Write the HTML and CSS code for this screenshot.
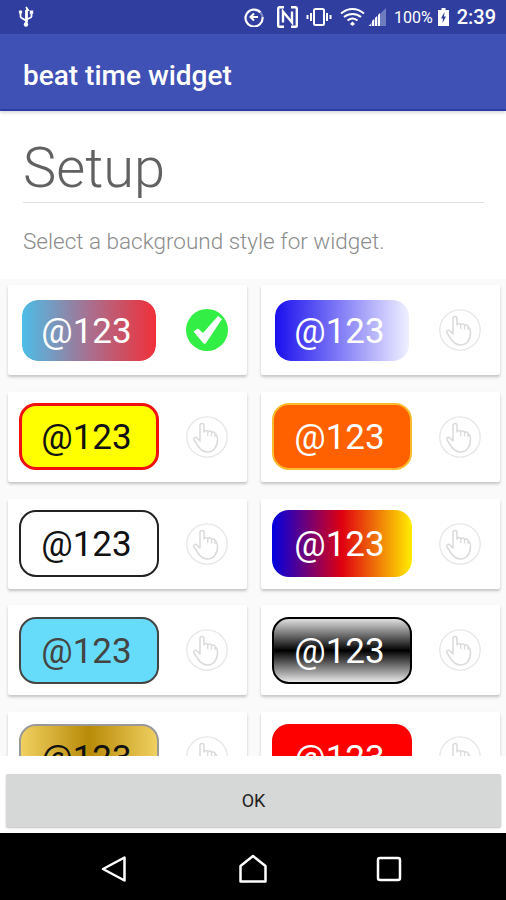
FILE: index.html
```html
<!DOCTYPE html>
<html lang="en">
<head>
    <meta charset="UTF-8">
    <meta name="viewport" content="width=device-width, initial-scale=1.0">
    <title>beat time widget</title>
    <link rel="stylesheet" href="styles.css">
</head>
<body>

    <svg class="defs" width="0" height="0">
        <symbol id="hand" viewBox="0 0 42 42">
            <circle cx="21" cy="21" r="20.2" fill="none" stroke="#e6e6e6" stroke-width="1.3"/>
            <path d="M14 25V9.500c0-2.700 4-2.700 4 0V16c.5-2 3.500-2 4 0 .5-1.500 3.300-1.300 3.700.6.6-1.200 3.200-.8 3.500 1.200 1.500 1 2.300 3 2.300 6 0 7-4 12.200-10 12.200-5 0-7.500-3-9.500-6l-4-6c-1.200-2 1.200-3.500 3-2z" fill="none" stroke="#dadada" stroke-width="1.500" stroke-linejoin="round"/>
            <path d="M21.700 16v4M25.500 17v3.500M29 18v3" fill="none" stroke="#dadada" stroke-width="1.200"/>
        </symbol>
    </svg>

    <div class="status-bar">
        <svg class="usb" width="18" height="22" viewBox="0 0 18 22">
            <path d="M9 1l2 3H10v12.500M9 4v14M3.500 7v3.500c0 2 5.500 3 5.500 4.500M14.500 8v2.500c0 2-5.500 2-5.500 4" fill="none" stroke="#fff" stroke-width="1.800"/>
            <circle cx="9" cy="18.500" r="2.200" fill="#fff"/>
            <circle cx="3.500" cy="6" r="1.800" fill="#fff"/>
            <rect x="12.800" y="4.500" width="3.400" height="3.400" fill="#fff"/>
        </svg>
        <div class="status-right">
            <svg width="20" height="20" viewBox="0 0 20 20">
                <path d="M16.500 5.500A8.500 8.500 0 1 0 18.500 10" fill="none" stroke="#fff" stroke-width="2.200"/>
                <path d="M16.500 5.500A8.500 8.500 0 0 1 18.500 10" fill="none" stroke="#7c88c8" stroke-width="2.200"/>
                <path d="M14 10H7M10 6.500L6.500 10l3.500 3.500" fill="none" stroke="#fff" stroke-width="2"/>
            </svg>
            <svg class="nfc" width="21" height="22" viewBox="0 0 21 22">
                <path d="M7 1.200H2.500a1.300 1.300 0 0 0-1.300 1.300v17a1.300 1.300 0 0 0 1.300 1.300H7M14 1.200h4.500a1.300 1.300 0 0 1 1.300 1.300v17a1.300 1.300 0 0 1-1.300 1.300H14" fill="none" stroke="#fff" stroke-width="2.400"/>
                <path d="M6 16.500V5.500l9 11V5.500" fill="none" stroke="#fff" stroke-width="2.400"/>
            </svg>
            <svg width="26" height="20" viewBox="0 0 26 20">
                <rect x="8" y="2" width="10" height="16" rx="1.500" fill="none" stroke="#fff" stroke-width="2"/>
                <path d="M5 6v8M1.500 8v4M21 6v8M24.500 8v4" stroke="#fff" stroke-width="2"/>
            </svg>
            <svg width="25" height="20" viewBox="0 0 25 20">
                <path d="M1 6.500c7-6 16-6 23 0M4 10c5-4 12-4 17 0M7.500 13.500c3-2.300 7-2.300 10 0" fill="none" stroke="#fff" stroke-width="2"/>
                <path d="M10 17l2.500-2.500L15 17l-2.500 2z" fill="#fff"/>
            </svg>
            <svg class="signal" width="18" height="18" viewBox="0 0 18 18">
                <path d="M0 18L18 0v18z" fill="#6f7bbf"/>
                <path d="M1 18l2-2v2zM4 18v-5l2-2v7zM7 18v-8l2-2v10zM10 18V7l2-2v13z" fill="#fff"/>
            </svg>
            <span class="percent">100%</span>
            <svg class="battery" width="11" height="18" viewBox="0 0 11 18">
                <path d="M3.500 0h4v2H11v16H0V2h3.500z" fill="#fff"/>
                <path d="M6.500 4L3 10.500h2L4.500 15 8 8.500H6z" fill="#303f9f"/>
            </svg>
            <span class="clock">2:39</span>
        </div>
    </div>

    <div class="app-bar">beat time widget</div>

    <div class="setup">
        <h1>Setup</h1>
        <p>Select a background style for widget.</p>
    </div>

    <!-- Styles list, cut off by the footer -->
    <div class="style-list">
        <div class="style-grid">
            <div class="card">
                <div class="preview p-sunset">@123</div>
                <svg class="pick" viewBox="0 0 42 42">
                    <circle cx="21" cy="21" r="21" fill="#33ee44"/>
                    <path d="M7.500 22.500l4.500-3 5 4.500L32 7l4 3-16 24c-.8 1.100-2 1.100-2.900.1z" fill="#fff"/>
                </svg>
            </div>
            <div class="card">
                <div class="preview p-blue">@123</div>
                <svg class="pick"><use href="#hand"/></svg>
            </div>
            <div class="card">
                <div class="preview p-yellow">@123</div>
                <svg class="pick"><use href="#hand"/></svg>
            </div>
            <div class="card">
                <div class="preview p-orange">@123</div>
                <svg class="pick"><use href="#hand"/></svg>
            </div>
            <div class="card">
                <div class="preview p-white">@123</div>
                <svg class="pick"><use href="#hand"/></svg>
            </div>
            <div class="card">
                <div class="preview p-rainbow">@123</div>
                <svg class="pick"><use href="#hand"/></svg>
            </div>
            <div class="card">
                <div class="preview p-cyan">@123</div>
                <svg class="pick"><use href="#hand"/></svg>
            </div>
            <div class="card">
                <div class="preview p-chrome">@123</div>
                <svg class="pick"><use href="#hand"/></svg>
            </div>
            <div class="card">
                <div class="preview p-gold">@123</div>
                <svg class="pick"><use href="#hand"/></svg>
            </div>
            <div class="card">
                <div class="preview p-red">@123</div>
                <svg class="pick"><use href="#hand"/></svg>
            </div>
        </div>
    </div>

    <div class="footer">
        <button class="ok-btn">OK</button>
    </div>

    <div class="nav-bar">
        <svg width="26" height="28" viewBox="0 0 26 28">
            <path d="M2 14L23.500 2.500v23z" fill="none" stroke="#fff" stroke-width="2.500" stroke-linejoin="round"/>
        </svg>
        <svg class="nav-home" width="30" height="30" viewBox="0 0 30 30">
            <path d="M2.500 12L15 2l12.500 10v15.500h-25z" fill="none" stroke="#fff" stroke-width="2.500" stroke-linejoin="round"/>
        </svg>
        <svg width="26" height="26" viewBox="0 0 26 26">
            <rect x="2" y="2" width="22" height="22" rx="2" fill="none" stroke="#fff" stroke-width="2.500"/>
        </svg>
    </div>

</body>
</html>
```

FILE: styles.css
```css
html, body {
    height: 100%;
}

body {
    margin: 0;
    height: 900px;
    overflow: hidden;
    display: flex;
    flex-direction: column;
    font-family: 'Roboto', sans-serif;
    background-color: #fff;
}

.defs {
    position: absolute;
}

/* Status bar */
.status-bar {
    height: 34px;
    flex-shrink: 0;
    display: flex;
    align-items: center;
    justify-content: space-between;
    padding: 0 10px 0 17px;
    background-color: #303f9f;
    color: #fff;
}

.status-right {
    display: flex;
    align-items: center;
    gap: 8px;
}

.nfc {
    margin-left: 5px;
}

.signal {
    margin-left: -5px;
}

.percent {
    font-size: 16px;
}

.battery {
    margin-left: -3px;
}

.clock {
    font-size: 20px;
    font-weight: 500;
}

/* App bar */
.app-bar {
    height: 77px;
    flex-shrink: 0;
    display: flex;
    align-items: center;
    padding: 7px 0 0 23px;
    box-sizing: border-box;
    background-color: #3f51b5;
    border-bottom: 2px solid #2a3ca6;
    box-shadow: 0 2px 3px rgba(0, 0, 0, 0.15);
    color: #fff;
    font-size: 28px;
    font-weight: 500;
    position: relative;
}

/* Setup heading */
.setup {
    height: 168px;
    flex-shrink: 0;
    padding: 0 22px 0 23px;
}

.setup h1 {
    margin: 0;
    height: 92px;
    box-sizing: border-box;
    padding-top: 27px;
    border-bottom: 1px solid #e0e0e0;
    font-size: 56px;
    line-height: 61px;
    font-weight: 300;
    color: #616161;
}

.setup p {
    margin: 26px 0 0;
    font-size: 22.5px;
    line-height: 24px;
    font-weight: 300;
    color: #8c8c8c;
}

/* Style list */
.style-list {
    flex: 1;
    min-height: 0;
    overflow: hidden;
    background-color: #fafafa;
    padding: 6px 6px 0 8px;
}

.style-grid {
    display: grid;
    grid-template-columns: 239px 239px;
    column-gap: 14px;
    row-gap: 16.75px;
}

.card {
    height: 90px;
    display: flex;
    align-items: center;
    justify-content: space-between;
    padding: 0 19px 0 11px;
    background-color: #fff;
    border-radius: 2px;
    box-shadow: 0 2px 3px rgba(0, 0, 0, 0.22);
}

.preview {
    width: 140px;
    height: 67px;
    box-sizing: border-box;
    display: flex;
    align-items: center;
    justify-content: center;
    padding: 2px 5px 0 0;
    border-radius: 17px;
    font-size: 35px;
    color: #fff;
}

.pick {
    width: 42px;
    height: 42px;
}

.p-sunset {
    border: 3px solid #fff;
    background: linear-gradient(to right, #4dbde8, #a8708f 50%, #f0303a);
    background-clip: padding-box;
    border-radius: 19px;
}

.p-blue {
    border: 3px solid #fff;
    background: linear-gradient(to right, #1a10ee, #f0f0ff);
    background-clip: padding-box;
    border-radius: 19px;
}

.p-yellow {
    background-color: #ffff00;
    border: 3px solid #f01010;
    color: #111;
}

.p-orange {
    background-color: #ff6000;
    border: 2px solid #fbb92c;
}

.p-white {
    background-color: #fff;
    border: 2px solid #222;
    color: #111;
}

.p-rainbow {
    background: linear-gradient(to right, #0000e0, #e00010 50%, #ffee00);
}

.p-cyan {
    background-color: #66dcfa;
    border: 2px solid #444;
    color: #444;
}

.p-chrome {
    background: linear-gradient(to bottom, #e0e0e0, #000 50%, #e8e8e8);
    border: 2px solid #000;
}

.p-gold {
    background: linear-gradient(to right, #f0d060, #b88a08 50%, #f0d060);
    border: 2px solid #999;
    color: #111;
}

.p-red {
    background-color: #ff0000;
}

/* Footer */
.footer {
    height: 77px;
    flex-shrink: 0;
    box-sizing: border-box;
    padding: 18px 5px 6px 6px;
    background-color: #fff;
    position: relative;
}

.ok-btn {
    display: block;
    width: 100%;
    height: 53px;
    border: 0;
    border-radius: 2px;
    background-color: #d6d7d7;
    box-shadow: 0 1px 2px rgba(0, 0, 0, 0.25);
    font-family: 'Roboto', sans-serif;
    font-size: 18px;
    color: #222;
}

/* Navigation bar */
.nav-bar {
    height: 67px;
    flex-shrink: 0;
    box-sizing: border-box;
    display: flex;
    align-items: center;
    justify-content: space-between;
    padding: 5px 104px 0 101px;
    background-color: #000;
}

.nav-home {
    margin-left: 3px;
}
```
